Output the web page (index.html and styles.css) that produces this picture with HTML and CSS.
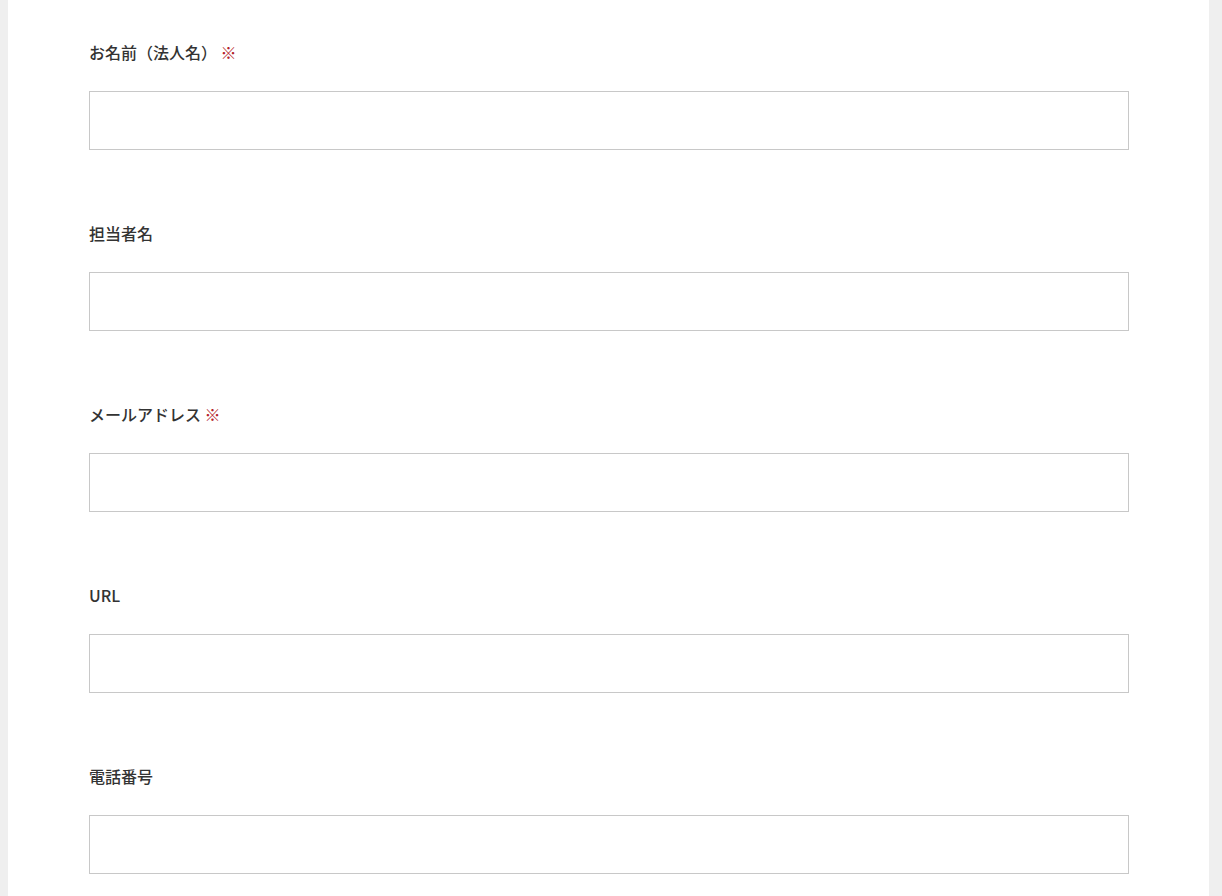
FILE: index.html
```html
<!DOCTYPE html>
<html lang="ja">
<head>
<meta charset="utf-8">
<title>お問い合わせ</title>
<link rel="stylesheet" href="styles.css">
</head>
<body>
<main class="panel">
  <form class="form">
    <div class="field">
      <label class="label" for="f1">お名前（法人名） <span class="req">※</span></label>
      <input class="input" id="f1" type="text">
    </div>
    <div class="field">
      <label class="label" for="f2">担当者名</label>
      <input class="input" id="f2" type="text">
    </div>
    <div class="field">
      <label class="label" for="f3">メールアドレス <span class="req">※</span></label>
      <input class="input" id="f3" type="email">
    </div>
    <div class="field">
      <label class="label" for="f4">URL</label>
      <input class="input" id="f4" type="url">
    </div>
    <div class="field">
      <label class="label" for="f5">電話番号</label>
      <input class="input" id="f5" type="tel">
    </div>
  </form>
</main>
</body>
</html>
```
FILE: styles.css
```css
html, body {
  margin: 0;
  padding: 0;
  background: #efefef;
  height: 100%;
  overflow: hidden;
}
body {
  font-family: "Noto Sans CJK JP", "Noto Sans", sans-serif;
  color: #333333;
}
.panel {
  margin-left: 8px;
  width: 1201px;
  min-height: 100%;
  box-sizing: border-box;
  background: #ffffff;
  padding: 40px 80px 0 81px;
}
.form {
  display: flex;
  flex-direction: column;
  gap: 71px;
}
.field {
  display: flex;
  flex-direction: column;
  gap: 27px;
}
.label {
  font-size: 16px;
  line-height: 24px;
  font-weight: 500;
  color: #333333;
}
.req {
  color: #b3222a;
  font-weight: 400;
}
.input {
  display: block;
  box-sizing: border-box;
  width: 1040px;
  height: 59px;
  margin: 0;
  border: 1px solid #c8c8c8;
  border-radius: 0;
  background: #ffffff;
  padding: 0 12px;
  font-family: inherit;
  font-size: 16px;
  outline: none;
}
```
